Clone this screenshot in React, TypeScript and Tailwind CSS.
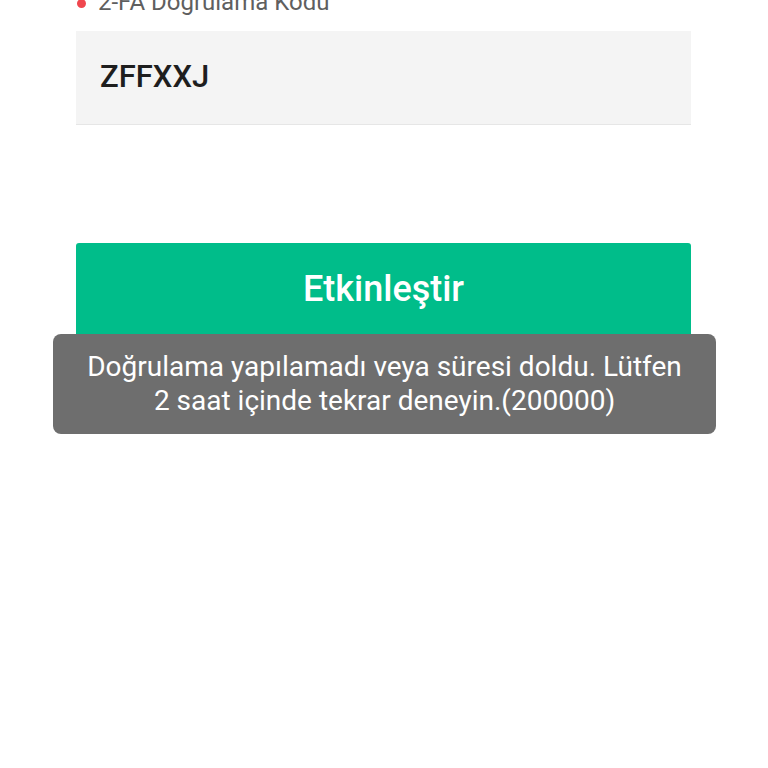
import React from "react"

export default function App() {
  return (
    <div
      className="relative h-[768px] w-[768px] overflow-hidden bg-white"
      style={{ fontFamily: "Roboto, 'Noto Sans', sans-serif" }}
    >
      <div className="px-[76px] pr-[77px]">
        <div className="-mt-[13px] flex h-[30px] items-center gap-[12px] pl-[1px]">
          <span className="mt-[2px] h-[9px] w-[9px] rounded-full bg-[#f0474e]" />
          <span className="text-[24px] leading-[30px] text-[#5f5f5f]">2-FA Doğrulama Kodu</span>
        </div>
        <div className="mt-[14px] flex h-[94px] items-center border-b border-[#e6e6e6] bg-[#f4f4f4] pl-[24px]">
          <span className="text-[31px] font-medium text-[#1e1e1e]">ZFFXXJ</span>
        </div>
        <button className="mt-[118px] flex h-[94px] w-full items-start justify-center rounded-[3px] bg-[#00bd8a] pt-[25px] text-[36px] font-medium leading-[42px] text-white">
          Etkinleştir
        </button>
      </div>

      <div className="absolute left-[53px] top-[334px] flex h-[100px] w-[663px] flex-col items-center justify-center rounded-[8px] bg-[#6e6e6e] text-center text-[28px] leading-[34px] text-white">
        <p>Doğrulama yapılamadı veya süresi doldu. Lütfen</p>
        <p>2 saat içinde tekrar deneyin.(200000)</p>
      </div>
    </div>
  )
}
